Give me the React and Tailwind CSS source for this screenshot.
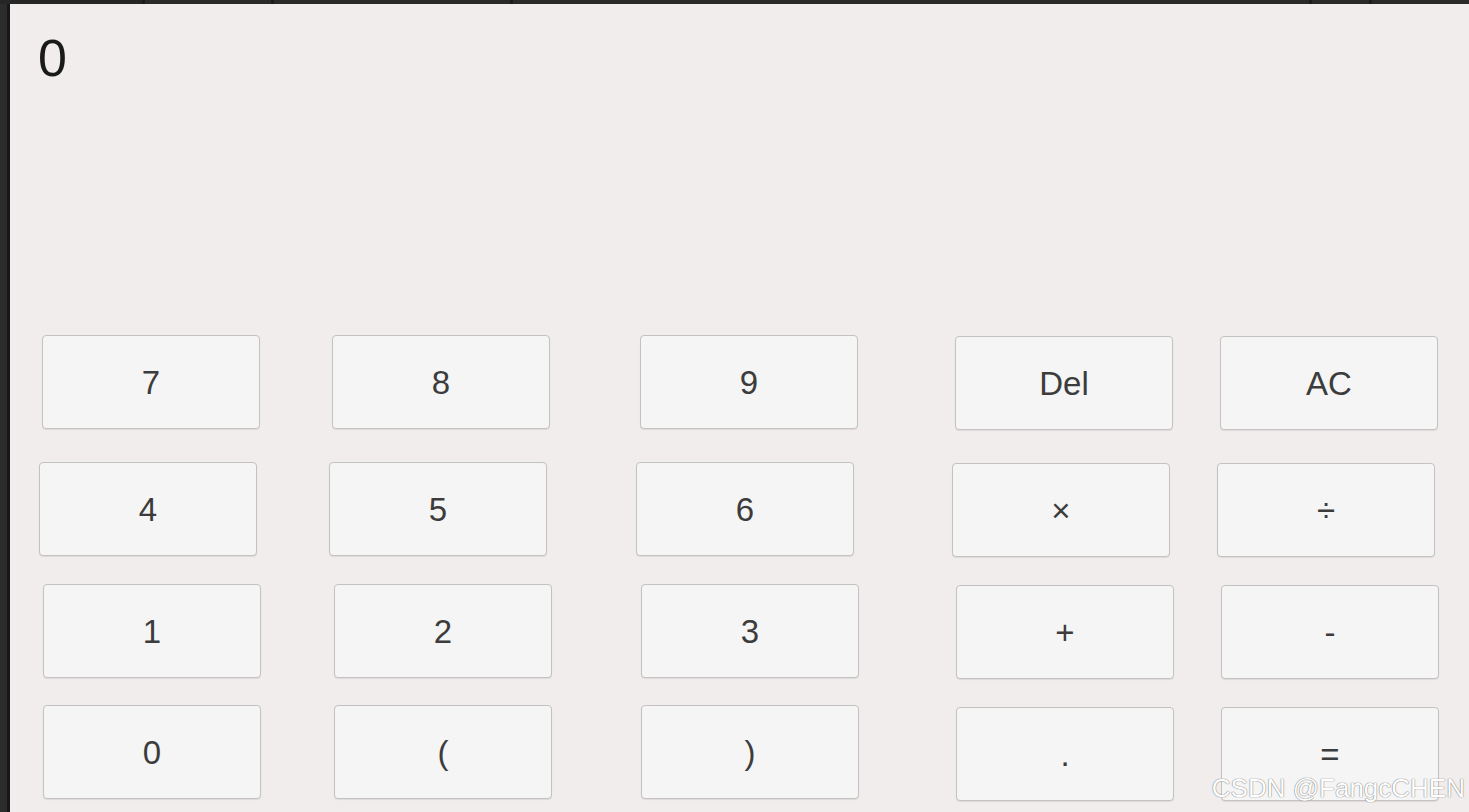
const ROWS = [
    {
        cls: 'mt-0',
        keys: [
            { label: '7', cls: 'ml-[32px]' },
            { label: '8', cls: 'ml-[72px]' },
            { label: '9', cls: 'ml-[90px]' },
            { label: 'Del', cls: 'ml-[97px] mt-[1px]' },
            { label: 'AC', cls: 'ml-[47px] mt-[1px]' }
        ]
    },
    {
        cls: 'mt-[32px]',
        keys: [
            { label: '4', cls: 'ml-[29px]' },
            { label: '5', cls: 'ml-[72px]' },
            { label: '6', cls: 'ml-[89px]' },
            { label: '×', cls: 'ml-[98px] mt-[1px]' },
            { label: '÷', cls: 'ml-[47px] mt-[1px]' }
        ]
    },
    {
        cls: 'mt-[27px]',
        keys: [
            { label: '1', cls: 'ml-[33px]' },
            { label: '2', cls: 'ml-[73px]' },
            { label: '3', cls: 'ml-[89px]' },
            { label: '+', cls: 'ml-[97px] mt-[1px]' },
            { label: '-', cls: 'ml-[47px] mt-[1px]' }
        ]
    },
    {
        cls: 'mt-[26px]',
        keys: [
            { label: '0', cls: 'ml-[33px]' },
            { label: '(', cls: 'ml-[73px]' },
            { label: ')', cls: 'ml-[89px]' },
            { label: '.', cls: 'ml-[97px] mt-[2px]' },
            { label: '=', cls: 'ml-[47px] mt-[2px]' }
        ]
    }
];

function Key({ label, cls }) {
    return (
        <button
            className={`${cls} w-[218px] h-[94px] shrink-0 flex items-center justify-center bg-[#f5f5f5] border border-[#c4c2c1] rounded-[4px] text-[33px] leading-none text-[#3c3c3c] shadow-[0_1px_1px_rgba(0,0,0,0.08)]`}
        >
            {label}
        </button>
    );
}

export default function App() {
    return (
        <div className="w-[1469px] h-[812px] overflow-hidden flex flex-col bg-[#262626] font-['Liberation_Sans',Arial,sans-serif]">
            {/* window frame top */}
            <div className="h-[4px] shrink-0 flex gap-[3px] bg-[#1c1c1c]">
                <div className="w-[142px] bg-[#262626]" />
                <div className="w-[126px] bg-[#2a2a2a]" />
                <div className="w-[236px] bg-[#2a2a2a]" />
                <div className="w-[796px] bg-[#2a2a2a]" />
                <div className="w-[57px] bg-[#2a2a2a]" />
                <div className="flex-1 bg-[#2a2a2a]" />
            </div>

            <div className="flex-1 flex">
                {/* window frame left */}
                <div className="w-[7px] bg-[#2c2c2c]" />
                <div className="w-[3px] bg-[#181818]" />

                <main className="relative flex-1 flex flex-col bg-[#f0edec]">
                    <div className="h-[331px] shrink-0 pl-[28px] pt-[28px]">
                        <span className="text-[52px] leading-none text-[#1a1a1a]">0</span>
                    </div>

                    {ROWS.map((row, i) => (
                        <div key={i} className={`${row.cls} flex items-start`}>
                            {row.keys.map((k) => (
                                <Key key={k.label} label={k.label} cls={k.cls} />
                            ))}
                        </div>
                    ))}

                    <div className="absolute right-[4px] bottom-[11px] text-[26px] leading-none text-white [text-shadow:0_0_1px_#777,0_0_1px_#777]">
                        CSDN @FangcCHEN
                    </div>
                </main>
            </div>
        </div>
    );
}
